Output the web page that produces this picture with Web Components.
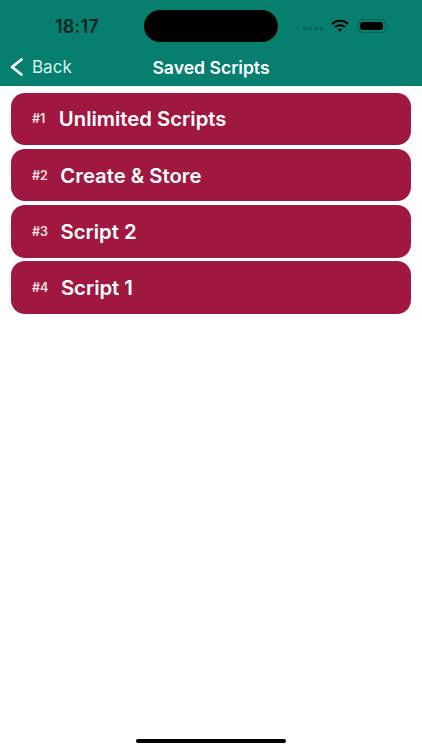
<!DOCTYPE html>
<html>
<head>
<meta charset="utf-8">
<title>Saved Scripts</title>
<style>
html, body { margin: 0; height: 100%; background: #fff; }
body { font-family: Inter, "Liberation Sans", sans-serif; overflow: hidden; }
</style>
</head>
<body>
<app-screen>
  <nav-header slot="header" title="Saved Scripts" back="Back"></nav-header>
  <script-row num="#1" name="Unlimited Scripts" gap="13.5"></script-row>
  <script-row num="#2" name="Create &amp; Store" gap="12.5"></script-row>
  <script-row num="#3" name="Script 2" gap="12.5"></script-row>
  <script-row num="#4" name="Script 1" gap="12.5"></script-row>
</app-screen>

<script>
class AppScreen extends HTMLElement {
    constructor() {
        super();
        this.attachShadow({mode: "open"}).innerHTML = `
        <style>
        :host { display: flex; flex-direction: column; width: 422px; height: 750px; background: #fff; }
        .list { display: flex; flex-direction: column; gap: 3.8px; padding: 6.5px 11px 0; }
        .home { margin: auto auto 7px; width: 150px; height: 4px; border-radius: 2px; background: #000; }
        </style>
        <slot name="header"></slot>
        <div class="list"><slot></slot></div>
        <div class="home"></div>
        `;
    }
}

class StatusBar extends HTMLElement {
    constructor() {
        super();
        this.attachShadow({mode: "open"}).innerHTML = `
        <style>
        :host { display: flex; align-items: center; height: 32px; padding-top: 10px; color: #08241f; }
        .time { width: 144px; box-sizing: border-box; padding-left: 55px; font-size: 18px; font-weight: 600; letter-spacing: .2px; }
        .island { width: 134px; height: 32px; border-radius: 16px; background: #000; }
        .icons { display: flex; align-items: center; margin-left: 25px; }
        .dots { display: flex; gap: 1.6px; margin: 5px 8px 0 0; }
        .dots i { width: 3.8px; height: 3.8px; border-radius: 50%; background: #0b5f53; }
        svg { display: block; }
        .battery { position: relative; display: flex; margin-left: 9px; padding: 1.5px; width: 23px; height: 8.5px; border: 1px solid #0a5c50; border-radius: 4px; }
        .battery b { flex: 1; background: #000; border-radius: 3px; }
        .battery::after { content: ""; position: absolute; right: -3.5px; top: 3.5px; width: 1.5px; height: 4px; border-radius: 1px; background: #0a5c50; }
        </style>
        <span class="time">18:17</span>
        <div class="island"></div>
        <div class="icons">
          <div class="dots"><i></i><i></i><i></i><i></i></div>
          <svg width="18" height="14" viewBox="0 0 18 14" fill="none" stroke="#000" stroke-width="2">
            <path d="M1 5 C5.5 .8 12.5 .8 17 5"/>
            <path d="M4 8 C6.8 5.6 11.2 5.6 14 8"/>
            <path d="M6.8 10.2 L9 12.8 L11.2 10.2 C9.8 9.2 8.2 9.2 6.8 10.2 Z" fill="#000" stroke="none"/>
          </svg>
          <div class="battery"><b></b></div>
        </div>
        `;
    }
}

class NavHeader extends HTMLElement {
    constructor() {
        super();
        this.attachShadow({mode: "open"}).innerHTML = `
        <style>
        :host { display: block; height: 86px; background: #067f6e; }
        .bar { display: grid; grid-template-columns: 1fr auto 1fr; align-items: center; height: 34px; margin-top: 8px; color: #fff; }
        .back { display: flex; align-items: center; gap: 7px; padding-left: 9px; font-size: 17px; color: #d9f2ec; }
        .title { font-size: 17.6px; font-weight: 600; }
        svg { display: block; }
        </style>
        <status-bar></status-bar>
        <div class="bar">
          <div class="back">
            <svg width="16" height="20" viewBox="0 0 16 20" fill="none" stroke="#fff" stroke-width="2.8" stroke-linecap="round" stroke-linejoin="round"><path d="M12.5 2.5 L3 10 L12.5 17.5"/></svg>
            <span>${this.getAttribute("back")}</span>
          </div>
          <div class="title">${this.getAttribute("title")}</div>
          <div></div>
        </div>
        `;
    }
}

class ScriptRow extends HTMLElement {
    constructor() {
        super();
        const name = this.getAttribute("name").replace("&", "&amp;");
        this.attachShadow({mode: "open"}).innerHTML = `
        <style>
        :host { display: flex; align-items: center; height: 52.5px; padding-left: 21px; border-radius: 14px; background: #a0173f; color: #fff; }
        .num { font-size: 12.5px; font-weight: 600; color: #f6e3e9; }
        .name { margin-left: ${this.getAttribute("gap")}px; font-size: 20.3px; font-weight: 600; }
        </style>
        <span class="num">${this.getAttribute("num")}</span>
        <span class="name">${name}</span>
        `;
    }
}

customElements.define("status-bar", StatusBar);
customElements.define("nav-header", NavHeader);
customElements.define("script-row", ScriptRow);
customElements.define("app-screen", AppScreen);
</script>
</body>
</html>
